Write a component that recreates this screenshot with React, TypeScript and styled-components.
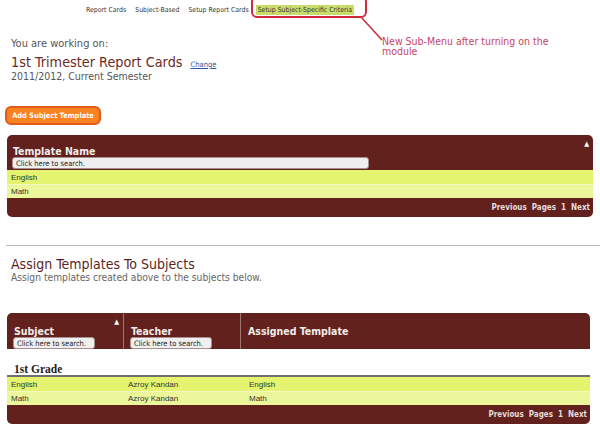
import * as React from 'react'
import styled, { createGlobalStyle } from 'styled-components'

const tahoma = `"DejaVu Sans Condensed", "DejaVu Sans", sans-serif`
const arial = `"Liberation Sans", Arial, sans-serif`
const maroon = '#62211c'

const GlobalStyle = createGlobalStyle`
  body {
    margin: 0;
    background: #fff;
    font-family: ${tahoma};
  }
`

type Row = { cells: string[] }

const templates: Row[] = [{ cells: ['English'] }, { cells: ['Math'] }]
const assignments: Row[] = [
    { cells: ['English', 'Azroy Kandan', 'English'] },
    { cells: ['Math', 'Azroy Kandan', 'Math'] },
]

function SearchBox({ width }: { width: number }) {
    return <Search style={{ width }} defaultValue="Click here to search." />
}

function App() {
    return (
        <Page>
            <GlobalStyle />
            <Nav>
                <NavItem>Report Cards</NavItem>
                <NavItem>Subject-Based</NavItem>
                <NavItem>Setup Report Cards</NavItem>
                <NavItem $active>Setup Subject-Specific Criteria</NavItem>
            </Nav>
            <Callout />
            <Connector width="32" height="30" viewBox="0 0 32 30">
                <line x1="1" y1="1" x2="22" y2="24" stroke="#c9303f" strokeWidth="1.6" />
            </Connector>
            <Note>New Sub-Menu after turning on the module</Note>

            <Working>
                <Lead>You are working on:</Lead>
                <TitleRow>
                    <Title>1st Trimester Report Cards</Title>
                    <ChangeLink href="#">Change</ChangeLink>
                </TitleRow>
                <Term>2011/2012, Current Semester</Term>
            </Working>

            <AddButton>Add Subject Template</AddButton>

            <Panel>
                <Head>
                    <HeadCell>
                        <HeadLabel>Template Name</HeadLabel>
                        <SearchBox width={357} />
                    </HeadCell>
                    <SortArrow>▲</SortArrow>
                </Head>
                {templates.map((r, i) => (
                    <DataRow key={i} $odd={i % 2 === 1} $cols="1fr">
                        {r.cells.map(c => <DataCell key={c}>{c}</DataCell>)}
                    </DataRow>
                ))}
                <Foot>Previous&nbsp; Pages&nbsp; 1&nbsp; Next</Foot>
            </Panel>

            <Rule />

            <Section>
                <SectionTitle>Assign Templates To Subjects</SectionTitle>
                <SectionSub>Assign templates created above to the subjects below.</SectionSub>
            </Section>

            <Panel $narrow>
                <GridHead>
                    <GridHeadCell>
                        <HeadLabel>Subject</HeadLabel>
                        <SearchBox width={82} />
                        <CellArrow>▲</CellArrow>
                    </GridHeadCell>
                    <GridHeadCell>
                        <HeadLabel>Teacher</HeadLabel>
                        <SearchBox width={82} />
                    </GridHeadCell>
                    <GridHeadCell $last>
                        <HeadLabel>Assigned Template</HeadLabel>
                    </GridHeadCell>
                </GridHead>
                <Group>1st Grade</Group>
                {assignments.map((r, i) => (
                    <DataRow key={i} $odd={i % 2 === 1} $cols="117px 121px 1fr">
                        {r.cells.map((c, j) => <DataCell key={j}>{c}</DataCell>)}
                    </DataRow>
                ))}
                <Foot>Previous&nbsp; Pages&nbsp; 1&nbsp; Next</Foot>
            </Panel>
        </Page>
    )
}

export default App

const Page = styled.div`
    position: relative;
    width: 600px;
    height: 428px;
    overflow: hidden;
`
const Nav = styled.div`
    display: flex;
    align-items: center;
    gap: 5px;
    height: 15px;
    padding: 2px 0 0 84px;
    font-size: 6.9px;
    color: #333;
`
const NavItem = styled.span<{ $active?: boolean }>`
    padding: 1px 2px;
    background: ${p => (p.$active ? '#c9dd6d' : 'transparent')};
`
const Callout = styled.div`
    position: absolute;
    left: 251px;
    top: -4px;
    width: 112px;
    height: 18px;
    border: 2px solid #d02a3b;
    border-radius: 6px;
`
const Connector = styled.svg`
    position: absolute;
    left: 360px;
    top: 16px;
`
const Note = styled.div`
    position: absolute;
    left: 382px;
    top: 36px;
    width: 180px;
    font-size: 10.5px;
    line-height: 10px;
    color: #c84560;
`
const Working = styled.div`
    padding: 20px 0 0 11px;
    color: #555;
`
const Lead = styled.div`
    font-size: 11px;
    line-height: 14px;
`
const TitleRow = styled.div`
    display: flex;
    align-items: baseline;
    gap: 8px;
    margin-top: 4px;
`
const Title = styled.div`
    font-size: 14.3px;
    line-height: 15px;
    color: #6a2a25;
`
const ChangeLink = styled.a`
    font-size: 7.5px;
    color: #2d5a9e;
`
const Term = styled.div`
    font-size: 10.5px;
    line-height: 12px;
`
const AddButton = styled.button`
    display: block;
    margin: 24px 0 0 5px;
    width: 96px;
    height: 19px;
    padding: 0;
    background: #f7821f;
    border: 2px solid #e15a1c;
    border-radius: 6px;
    color: #fff;
    font-family: ${tahoma};
    font-size: 7.4px;
    font-weight: bold;
`
const Panel = styled.div<{ $narrow?: boolean }>`
    margin: ${p => (p.$narrow ? 29 : 10)}px ${p => (p.$narrow ? 10 : 7)}px 0 7px;
    border-radius: 5px;
    overflow: hidden;
`
const Head = styled.div`
    display: flex;
    justify-content: space-between;
    align-items: flex-start;
    height: 35px;
    background: ${maroon};
    box-sizing: border-box;
    padding: 0 4px 0 5px;
`
const HeadCell = styled.div`
    padding-top: 11px;
`
const HeadLabel = styled.div`
    font-size: 10.5px;
    line-height: 10px;
    font-weight: bold;
    color: #f2ecea;
    margin: 0 0 1px 1px;
`
const Search = styled.input`
    display: block;
    box-sizing: border-box;
    height: 12px;
    margin: 0;
    padding: 0 3px;
    border: 1px solid #a89090;
    border-radius: 3px;
    background: #efefef;
    font-family: ${tahoma};
    font-size: 7.5px;
    color: #222;
`
const SortArrow = styled.span`
    margin-top: 5px;
    font-size: 7px;
    color: #fff;
`
const DataRow = styled.div<{ $odd: boolean; $cols: string }>`
    display: grid;
    grid-template-columns: ${p => p.$cols};
    height: 14px;
    align-items: center;
    padding-left: 4px;
    background: ${p => (p.$odd ? '#ecf79b' : '#e5f46f')};
    border-top: ${p => (p.$odd ? '1px solid #f1f9c0' : 'none')};
    box-sizing: border-box;
`
const DataCell = styled.span`
    font-family: ${arial};
    font-size: 8px;
    color: #333;
`
const Foot = styled.div`
    height: 19px;
    line-height: 19px;
    background: ${maroon};
    text-align: right;
    padding-right: 3px;
    font-size: 8px;
    font-weight: bold;
    color: #e4dcdb;
`
const Rule = styled.hr`
    margin: 28px 0 0 6px;
    border: none;
    border-top: 1px solid #bbb;
`
const Section = styled.div`
    padding: 10px 0 0 11px;
`
const SectionTitle = styled.div`
    font-size: 14px;
    line-height: 16px;
    color: #5e1f1e;
`
const SectionSub = styled.div`
    font-size: 10.2px;
    line-height: 12px;
    color: #666;
`
const GridHead = styled.div`
    display: grid;
    grid-template-columns: 117px 117px 1fr;
    height: 36px;
    background: ${maroon};
`
const GridHeadCell = styled.div<{ $last?: boolean }>`
    position: relative;
    padding: 13px 0 0 6px;
    border-right: ${p => (p.$last ? 'none' : '1px solid #a07470')};
`
const CellArrow = styled.span`
    position: absolute;
    right: 4px;
    top: 5px;
    font-size: 7px;
    color: #fff;
`
const Group = styled.div`
    height: 28px;
    box-sizing: border-box;
    padding: 14px 0 0 7px;
    background: #fff;
    border-bottom: 2px solid #707070;
    font-family: "Liberation Serif", Georgia, serif;
    font-size: 11.5px;
    font-weight: bold;
    color: #222;
`
